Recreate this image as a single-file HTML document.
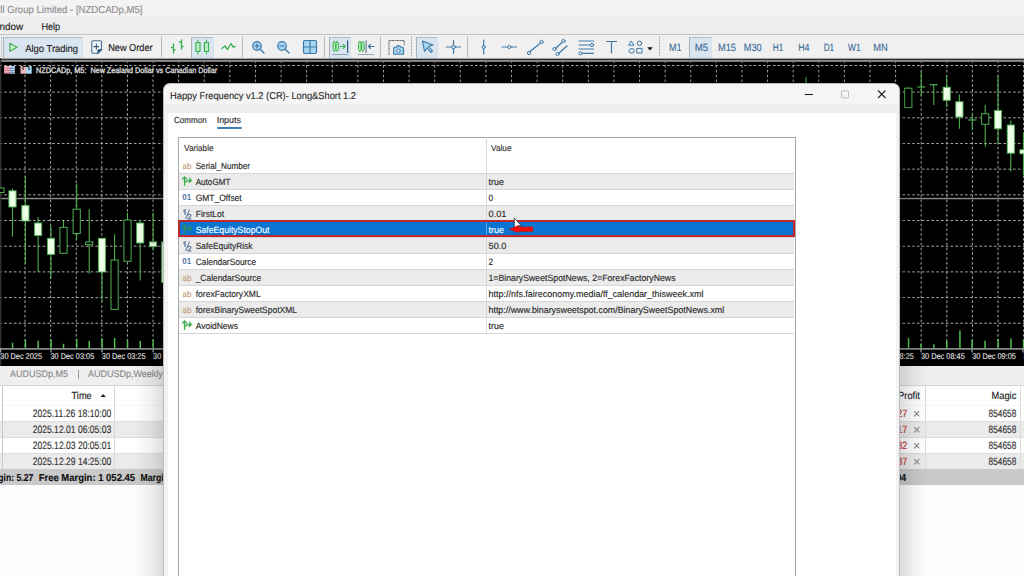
<!DOCTYPE html><html><head><meta charset="utf-8"><style>
*{margin:0;padding:0;box-sizing:border-box}
html,body{width:1024px;height:576px;overflow:hidden;background:#f0f0f0;font-family:"Liberation Sans",sans-serif;position:relative}
.a{position:absolute;white-space:nowrap}
.t{position:absolute;white-space:nowrap;line-height:1;-webkit-text-stroke:0.18px currentColor}
</style></head><body>
<div class="a" style="left:0;top:0;width:1024px;height:17px;background:#f3f3f3"></div>
<div class="a" style="left:0;top:17px;width:1024px;height:17px;background:#eeeeee"></div>
<svg class="a" style="left:0px;top:-8px;overflow:visible" width="148" height="26"><text x="0.30" y="20.50" font-family="Liberation Sans" font-size="10.174" fill="#8e8e8e" stroke="#8e8e8e" stroke-width="0.15" textLength="142.20" lengthAdjust="spacingAndGlyphs" text-rendering="geometricPrecision" xml:space="preserve">ll Group Limited - [NZDCADp,M5]</text></svg>
<svg class="a" style="left:-1px;top:9px;overflow:visible" width="29" height="26"><text x="0.51" y="20.70" font-family="Liberation Sans" font-size="10.174" fill="#1e1e1e" stroke="#1e1e1e" stroke-width="0.15" textLength="23.59" lengthAdjust="spacingAndGlyphs" text-rendering="geometricPrecision" xml:space="preserve">ndow</text></svg>
<svg class="a" style="left:41px;top:9px;overflow:visible" width="24" height="26"><text x="0.40" y="20.70" font-family="Liberation Sans" font-size="10.174" fill="#1e1e1e" stroke="#1e1e1e" stroke-width="0.15" textLength="18.80" lengthAdjust="spacingAndGlyphs" text-rendering="geometricPrecision" xml:space="preserve">Help</text></svg>
<div class="a" style="left:0;top:33.6px;width:1024px;height:1px;background:#c4c4c4"></div>
<div class="a" style="left:0;top:34.6px;width:1024px;height:24px;background:#f0f0f0"></div>
<div class="a" style="left:1px;top:37px;width:1px;height:20px;border-left:1px dotted #b0b0b0"></div>
<div class="a" style="left:2.5px;top:36.5px;width:80.5px;height:21px;background:#d9e5f0;border:1px solid;border-color:#b4bcc4 #d6e0ea #d6e0ea #a8b0b8"></div>
<div class="a" style="left:191px;top:36.5px;width:22.5px;height:21px;background:#d9e5f0;border:1px solid;border-color:#b4bcc4 #d6e0ea #d6e0ea #a8b0b8"></div>
<div class="a" style="left:328.5px;top:36.5px;width:22.5px;height:21px;background:#d9e5f0;border:1px solid;border-color:#b4bcc4 #d6e0ea #d6e0ea #a8b0b8"></div>
<div class="a" style="left:415.5px;top:36.5px;width:22.5px;height:21px;background:#d9e5f0;border:1px solid;border-color:#b4bcc4 #d6e0ea #d6e0ea #a8b0b8"></div>
<div class="a" style="left:689px;top:36.5px;width:23px;height:21px;background:#d9e5f0;border:1px solid;border-color:#b4bcc4 #d6e0ea #d6e0ea #a8b0b8"></div>
<svg class="a" style="left:0;top:34px" width="1024" height="25" viewBox="0 34 1024 25" fill="none" stroke-linecap="round" stroke-linejoin="round">
<path d="M9.9 43.3L17.1 47.3L9.9 51.3Z" fill="#c4f4c4" stroke="#4aa85a" stroke-width="1.2"/>
<path d="M93 40.8H100.3Q101.5 40.8 101.5 42V49.6L97.8 53.3H93Q91.8 53.3 91.8 52.1V42Q91.8 40.8 93 40.8Z" fill="#f2f9ff" stroke="#4a6c8c" stroke-width="1.1"/><path d="M93.9 46.6H98.8M96.35 44.1V49.1" stroke="#3a5a78" stroke-width="1.1"/><path d="M97.8 53.3V50.8Q97.8 49.6 99 49.6H101.5Z" fill="#2e5a80" stroke="#2e5a80" stroke-width="0.8"/>
<path d="M161.5 37V57" stroke="#b8b8b8" stroke-width="1"/>
<path d="M242.5 37V57" stroke="#b8b8b8" stroke-width="1"/>
<path d="M324.5 37V57" stroke="#b8b8b8" stroke-width="1"/>
<path d="M380.5 37V57" stroke="#b8b8b8" stroke-width="1"/>
<path d="M467.5 37V57" stroke="#b8b8b8" stroke-width="1"/>
<path d="M411.5 37V57" stroke="#a0a0a0" stroke-width="1" stroke-dasharray="1 2"/>
<path d="M659.5 37V57" stroke="#a0a0a0" stroke-width="1" stroke-dasharray="1 2"/>
<path d="M173.5 44V53M171.5 47.5H173.5M173.5 50H175M181.5 40V49M179.5 42H181.5M181.5 46.5H183" stroke="#38b050" stroke-width="1.3"/>
<path d="M198 40V54M206.5 40V54" stroke="#38b050" stroke-width="1"/><rect x="196" y="42.5" width="4" height="9" fill="#c8f0c8" stroke="#38b050" stroke-width="1.2"/><rect x="204.5" y="42.5" width="4" height="9" fill="#c8f0c8" stroke="#38b050" stroke-width="1.2"/>
<path d="M222 48.5L225 46L227.5 49.5L231 43.5L233 47L235 46.5" stroke="#38b050" stroke-width="1.3"/>
<circle cx="257" cy="46" r="4.3" stroke="#3c78a8" stroke-width="1.2" fill="#a9d4f0"/><path d="M260 49L264 53" stroke="#3c78a8" stroke-width="1.4"/><path d="M254.8 46H259.2" stroke="#3c78a8" stroke-width="1.1"/>
<path d="M257 43.8V48.2" stroke="#3c78a8" stroke-width="1.1"/>
<circle cx="282" cy="46" r="4.3" stroke="#3c78a8" stroke-width="1.2" fill="#a9d4f0"/><path d="M285 49L289 53" stroke="#3c78a8" stroke-width="1.4"/><path d="M279.8 46H284.2" stroke="#3c78a8" stroke-width="1.1"/>
<rect x="303.5" y="40.5" width="13" height="13" rx="1.5" fill="#a9d4f0" stroke="#3c78a8" stroke-width="1.2"/><path d="M310 40.5V53.5M303.5 47H316.5" stroke="#3c78a8" stroke-width="1.2"/>
<path d="M334.4 41.3L335.7 43.6V49.4L334.4 51.7L333.09999999999997 49.4V43.6Z" fill="#b8f0b8" stroke="#38b050" stroke-width="1"/><path d="M337.4 41.3L338.7 43.6V49.4L337.4 51.7L336.09999999999997 49.4V43.6Z" fill="#b8f0b8" stroke="#38b050" stroke-width="1"/>
<path d="M340.5 46.5H345M343.2 44.5L345.2 46.5L343.2 48.5" stroke="#38b050" stroke-width="1.1"/><path d="M347.6 40.8V52.4" stroke="#34587c" stroke-width="1.2"/><path d="M333 54.5H347.6" stroke="#8a9aa8" stroke-width="0.9"/>
<path d="M359.8 41.3L361.1 43.6V49.4L359.8 51.7L358.5 49.4V43.6Z" fill="#b8f0b8" stroke="#38b050" stroke-width="1"/><path d="M362.8 41.3L364.1 43.6V49.4L362.8 51.7L361.5 49.4V43.6Z" fill="#b8f0b8" stroke="#38b050" stroke-width="1"/>
<path d="M366.1 40.8V52.4" stroke="#7890a0" stroke-width="1.4"/><path d="M368.5 46.5H374M370.5 44.5L368.5 46.5L370.5 48.5" stroke="#3c78a8" stroke-width="1.1"/><path d="M358.3 54.5H373.4" stroke="#8a9aa8" stroke-width="0.9"/>
<path d="M389 54.5V40.5H404.2V46" stroke="#5a5a5a" stroke-width="0.9" stroke-dasharray="1.2 1.3"/><path d="M393.6 54.3V48.3Q393.6 47.2 394.7 47.2H396.3L397.2 45.9H399.9L400.8 47.2H402.4Q403.5 47.2 403.5 48.3V54.3Z" fill="#a9d4f0" stroke="#3c78a8" stroke-width="1.1"/><circle cx="398.5" cy="50.7" r="1.7" fill="#f4f8fb" stroke="#3c78a8" stroke-width="0.9"/>
<path d="M422.5 41L433 45L428.5 46.5L432.5 51L431 52.5L427 48L424.5 51.5Z" fill="#a9d4f0" stroke="#3c78a8" stroke-width="1.1"/>
<path d="M453.5 40.5V53.5M446.5 47H460.5" stroke="#3c78a8" stroke-width="1.2"/><circle cx="453.5" cy="47" r="1.8" fill="#f0f0f0" stroke="#3c78a8" stroke-width="1"/>
<path d="M483.7 40V54" stroke="#3c78a8" stroke-width="1.2"/><circle cx="483.7" cy="47" r="1.6" fill="#f0f0f0" stroke="#3c78a8" stroke-width="1"/>
<path d="M502 47H516.5" stroke="#3c78a8" stroke-width="1.2"/><circle cx="509.3" cy="47" r="1.6" fill="#f0f0f0" stroke="#3c78a8" stroke-width="1"/>
<path d="M530 51.5L540.5 43" stroke="#3c78a8" stroke-width="1.2"/><circle cx="529" cy="53" r="1.6" fill="#f0f0f0" stroke="#3c78a8" stroke-width="1"/><circle cx="541.5" cy="42" r="1.6" fill="#f0f0f0" stroke="#3c78a8" stroke-width="1"/>
<path d="M556 48L563 41.5M559 53L567 46" stroke="#3c78a8" stroke-width="1.2"/><circle cx="554.5" cy="49" r="1.6" fill="#f0f0f0" stroke="#3c78a8" stroke-width="1"/><circle cx="563.5" cy="41" r="1.6" fill="#f0f0f0" stroke="#3c78a8" stroke-width="1"/><circle cx="557.5" cy="54" r="1.6" fill="#f0f0f0" stroke="#3c78a8" stroke-width="1"/>
<path d="M579 41H593.5M579 45H590.5M579 49H593.5M582.5 53.3H593.5" stroke="#3c78a8" stroke-width="1.2"/><circle cx="592" cy="45" r="1.6" fill="#f0f0f0" stroke="#3c78a8" stroke-width="1"/><circle cx="580.5" cy="53.3" r="1.6" fill="#f0f0f0" stroke="#3c78a8" stroke-width="1"/>
<path d="M606.5 41.5H616.5M611.5 41.5V53" stroke="#3c78a8" stroke-width="1.2"/>
<path d="M631.5 41.3L634 45.2H629Z" stroke="#3c78a8" stroke-width="1"/><circle cx="639.5" cy="43.3" r="2.2" stroke="#3c78a8" stroke-width="1"/><path d="M629 50.8L630.5 48.6H633L634.5 50.8L633 53H630.5Z" stroke="#3c78a8" stroke-width="1"/><rect x="637.2" y="48.4" width="4.8" height="4.6" stroke="#3c78a8" stroke-width="1"/>
<path d="M647.3 47.3H652.7L650 50.5Z" fill="#111"/>
</svg>
<svg class="a" style="left:25px;top:31px;overflow:visible" width="58" height="26"><text x="0.20" y="20.70" font-family="Liberation Sans" font-size="10.029" fill="#222" stroke="#222" stroke-width="0.15" textLength="52.90" lengthAdjust="spacingAndGlyphs" text-rendering="geometricPrecision" xml:space="preserve">Algo Trading</text></svg>
<svg class="a" style="left:108px;top:31px;overflow:visible" width="50" height="26"><text x="0.20" y="20.00" font-family="Liberation Sans" font-size="10.029" fill="#222" stroke="#222" stroke-width="0.15" textLength="44.40" lengthAdjust="spacingAndGlyphs" text-rendering="geometricPrecision" xml:space="preserve">New Order</text></svg>
<svg class="a" style="left:669px;top:31px;overflow:visible" width="18" height="26"><text x="0.00" y="20.10" font-family="Liberation Sans" font-size="10.465" fill="#3f6f98" stroke="#3f6f98" stroke-width="0.15" textLength="12.50" lengthAdjust="spacingAndGlyphs" text-rendering="geometricPrecision" xml:space="preserve">M1</text></svg>
<svg class="a" style="left:694px;top:31px;overflow:visible" width="19" height="26"><text x="0.70" y="20.10" font-family="Liberation Sans" font-size="10.465" fill="#3f6f98" stroke="#3f6f98" stroke-width="0.15" textLength="13.40" lengthAdjust="spacingAndGlyphs" text-rendering="geometricPrecision" xml:space="preserve">M5</text></svg>
<svg class="a" style="left:717px;top:31px;overflow:visible" width="24" height="26"><text x="0.90" y="20.10" font-family="Liberation Sans" font-size="10.465" fill="#3f6f98" stroke="#3f6f98" stroke-width="0.15" textLength="18.10" lengthAdjust="spacingAndGlyphs" text-rendering="geometricPrecision" xml:space="preserve">M15</text></svg>
<svg class="a" style="left:743px;top:31px;overflow:visible" width="24" height="26"><text x="0.70" y="20.10" font-family="Liberation Sans" font-size="10.465" fill="#3f6f98" stroke="#3f6f98" stroke-width="0.15" textLength="18.00" lengthAdjust="spacingAndGlyphs" text-rendering="geometricPrecision" xml:space="preserve">M30</text></svg>
<svg class="a" style="left:772px;top:31px;overflow:visible" width="16" height="26"><text x="0.70" y="20.10" font-family="Liberation Sans" font-size="10.465" fill="#3f6f98" stroke="#3f6f98" stroke-width="0.15" textLength="10.60" lengthAdjust="spacingAndGlyphs" text-rendering="geometricPrecision" xml:space="preserve">H1</text></svg>
<svg class="a" style="left:798px;top:31px;overflow:visible" width="17" height="26"><text x="0.20" y="20.10" font-family="Liberation Sans" font-size="10.465" fill="#3f6f98" stroke="#3f6f98" stroke-width="0.15" textLength="11.40" lengthAdjust="spacingAndGlyphs" text-rendering="geometricPrecision" xml:space="preserve">H4</text></svg>
<svg class="a" style="left:823px;top:31px;overflow:visible" width="16" height="26"><text x="0.70" y="20.10" font-family="Liberation Sans" font-size="10.465" fill="#3f6f98" stroke="#3f6f98" stroke-width="0.15" textLength="10.50" lengthAdjust="spacingAndGlyphs" text-rendering="geometricPrecision" xml:space="preserve">D1</text></svg>
<svg class="a" style="left:848px;top:31px;overflow:visible" width="18" height="26"><text x="0.00" y="20.10" font-family="Liberation Sans" font-size="10.465" fill="#3f6f98" stroke="#3f6f98" stroke-width="0.15" textLength="12.60" lengthAdjust="spacingAndGlyphs" text-rendering="geometricPrecision" xml:space="preserve">W1</text></svg>
<svg class="a" style="left:873px;top:31px;overflow:visible" width="20" height="26"><text x="0.30" y="20.10" font-family="Liberation Sans" font-size="10.465" fill="#3f6f98" stroke="#3f6f98" stroke-width="0.15" textLength="14.50" lengthAdjust="spacingAndGlyphs" text-rendering="geometricPrecision" xml:space="preserve">MN</text></svg>
<svg width="1024" height="308" viewBox="0 58 1024 308" style="position:absolute;left:0;top:58px">
<rect x="0" y="58" width="1024" height="308" fill="#000"/>
<rect x="0" y="58" width="1024" height="0.8" fill="#fafafa"/>
<rect x="0" y="58.8" width="1024" height="1" fill="#1c1c1c"/>
<rect x="0" y="59.8" width="1024" height="2.1" fill="#8a8a8a"/>
<path d="M25.00 62V348 M50.61 62V348 M76.21 62V348 M101.82 62V348 M127.42 62V348 M153.03 62V348 M178.64 62V348 M204.24 62V348 M229.85 62V348 M255.45 62V348 M281.06 62V348 M306.67 62V348 M332.27 62V348 M357.88 62V348 M383.48 62V348 M409.09 62V348 M434.70 62V348 M460.30 62V348 M485.91 62V348 M511.51 62V348 M537.12 62V348 M562.73 62V348 M588.33 62V348 M613.94 62V348 M639.54 62V348 M665.15 62V348 M690.76 62V348 M716.36 62V348 M741.97 62V348 M767.57 62V348 M793.18 62V348 M818.79 62V348 M844.39 62V348 M870.00 62V348 M895.60 62V348 M921.21 62V348 M946.82 62V348 M972.42 62V348 M998.03 62V348 M1023.63 62V348" stroke="#a8a8a8" stroke-width="1" stroke-dasharray="2.6 2.204" stroke-dashoffset="1.77" fill="none"/>
<path d="M0 65.50H1024 M0 92.11H1024 M0 117.80H1024 M0 143.48H1024 M0 169.16H1024 M0 194.84H1024 M0 220.53H1024 M0 246.21H1024 M0 271.89H1024 M0 297.58H1024 M0 323.26H1024" stroke="#a8a8a8" stroke-width="1" stroke-dasharray="2.6 2.204" stroke-dashoffset="0.6" fill="none"/>
<rect x="0" y="197.85" width="1024" height="1.4" fill="#8c8c8c"/>
<rect x="0" y="58" width="1.3" height="308" fill="#333"/>
<path d="M0.50 188V192.5" stroke="#4caf50" stroke-width="1.1"/>
<rect x="-3.10" y="188" width="7.2" height="4.50" fill="#000" stroke="#4caf50" stroke-width="1"/>
<path d="M12.50 188.3V236.7" stroke="#4caf50" stroke-width="1.1"/>
<rect x="8.90" y="190.8" width="7.2" height="16.20" fill="#eaffe4" stroke="#4caf50" stroke-width="0.9"/>
<path d="M25.40 176.3V263.8" stroke="#4caf50" stroke-width="1.1"/>
<rect x="21.80" y="205.4" width="7.2" height="15.60" fill="#eaffe4" stroke="#4caf50" stroke-width="0.9"/>
<path d="M38.10 216.9V272" stroke="#4caf50" stroke-width="1.1"/>
<rect x="34.50" y="223" width="7.2" height="12.60" fill="#eaffe4" stroke="#4caf50" stroke-width="0.9"/>
<path d="M51.00 226V278" stroke="#4caf50" stroke-width="1.1"/>
<rect x="47.40" y="238.3" width="7.2" height="16.10" fill="#eaffe4" stroke="#4caf50" stroke-width="0.9"/>
<path d="M63.50 221V253.3" stroke="#4caf50" stroke-width="1.1"/>
<rect x="59.90" y="227.3" width="7.2" height="26.00" fill="#000" stroke="#4caf50" stroke-width="1"/>
<path d="M76.70 183.5V239.8" stroke="#4caf50" stroke-width="1.1"/>
<rect x="73.10" y="209.2" width="7.2" height="24.30" fill="#000" stroke="#4caf50" stroke-width="1"/>
<path d="M89.20 209.2V273.8" stroke="#4caf50" stroke-width="1.1"/>
<rect x="85.60" y="241.9" width="7.2" height="2.70" fill="#000" stroke="#4caf50" stroke-width="1"/>
<path d="M102.00 238.3V302" stroke="#4caf50" stroke-width="1.1"/>
<rect x="98.40" y="238.3" width="7.2" height="33.70" fill="#eaffe4" stroke="#4caf50" stroke-width="0.9"/>
<path d="M114.60 234.2V309.4" stroke="#4caf50" stroke-width="1.1"/>
<rect x="111.00" y="260" width="7.2" height="49.40" fill="#000" stroke="#4caf50" stroke-width="1"/>
<path d="M127.50 212.7V261.3" stroke="#4caf50" stroke-width="1.1"/>
<rect x="123.90" y="220" width="7.2" height="41.30" fill="#000" stroke="#4caf50" stroke-width="1"/>
<path d="M140.20 220V280.4" stroke="#4caf50" stroke-width="1.1"/>
<rect x="136.60" y="223" width="7.2" height="20.00" fill="#eaffe4" stroke="#4caf50" stroke-width="0.9"/>
<path d="M153.10 212.7V250.2" stroke="#4caf50" stroke-width="1.1"/>
<rect x="149.50" y="241.9" width="7.2" height="4.80" fill="#eaffe4" stroke="#4caf50" stroke-width="0.9"/>
<path d="M165.30 235V282.5" stroke="#4caf50" stroke-width="1.1"/>
<rect x="161.70" y="242" width="7.2" height="40.50" fill="#eaffe4" stroke="#4caf50" stroke-width="0.9"/>
<path d="M806.00 77.3V84" stroke="#4caf50" stroke-width="1.1"/>
<path d="M908.30 87V107.6" stroke="#4caf50" stroke-width="1.1"/>
<rect x="904.70" y="88.2" width="7.2" height="19.40" fill="#000" stroke="#4caf50" stroke-width="1"/>
<path d="M921.25 70.5V96.5" stroke="#4caf50" stroke-width="1.1"/>
<path d="M917.25 87H925.25" stroke="#4caf50" stroke-width="1.2"/>
<path d="M933.75 84.7V104.9" stroke="#4caf50" stroke-width="1.1"/>
<path d="M929.75 84.7H937.75" stroke="#4caf50" stroke-width="1.2"/>
<path d="M946.70 75.7V107" stroke="#4caf50" stroke-width="1.1"/>
<rect x="943.10" y="87.2" width="7.2" height="13.10" fill="#eaffe4" stroke="#4caf50" stroke-width="0.9"/>
<path d="M959.40 94.5V128.8" stroke="#4caf50" stroke-width="1.1"/>
<rect x="955.80" y="101.75" width="7.2" height="15.25" fill="#eaffe4" stroke="#4caf50" stroke-width="0.9"/>
<path d="M972.30 114.25V129.9" stroke="#4caf50" stroke-width="1.1"/>
<path d="M968.30 120H976.30" stroke="#4caf50" stroke-width="1.2"/>
<path d="M985.20 104.9V146.5" stroke="#4caf50" stroke-width="1.1"/>
<rect x="981.60" y="113.8" width="7.2" height="10.45" fill="#000" stroke="#4caf50" stroke-width="1"/>
<path d="M998.00 75.7V143.4" stroke="#4caf50" stroke-width="1.1"/>
<rect x="994.40" y="110.5" width="7.2" height="18.30" fill="#eaffe4" stroke="#4caf50" stroke-width="0.9"/>
<path d="M1010.80 120.5V171.5" stroke="#4caf50" stroke-width="1.1"/>
<rect x="1007.20" y="125" width="7.2" height="28.20" fill="#eaffe4" stroke="#4caf50" stroke-width="0.9"/>
<path d="M1023.50 133V175" stroke="#4caf50" stroke-width="1.1"/>
<rect x="1019.90" y="149.7" width="7.2" height="4.10" fill="#eaffe4" stroke="#4caf50" stroke-width="0.9"/>
<rect x="11.80" y="342.7" width="1.5" height="5.30" fill="#50c050"/>
<rect x="24.70" y="340" width="1.5" height="8.00" fill="#50c050"/>
<rect x="37.40" y="340.6" width="1.5" height="7.40" fill="#50c050"/>
<rect x="50.30" y="339.6" width="1.5" height="8.40" fill="#50c050"/>
<rect x="62.80" y="343.75" width="1.5" height="4.25" fill="#50c050"/>
<rect x="76.00" y="339" width="1.5" height="9.00" fill="#50c050"/>
<rect x="88.50" y="341" width="1.5" height="7.00" fill="#50c050"/>
<rect x="101.30" y="338" width="1.5" height="10.00" fill="#50c050"/>
<rect x="113.90" y="338" width="1.5" height="10.00" fill="#50c050"/>
<rect x="126.80" y="340" width="1.5" height="8.00" fill="#50c050"/>
<rect x="139.50" y="341" width="1.5" height="7.00" fill="#50c050"/>
<rect x="152.40" y="339.6" width="1.5" height="8.40" fill="#50c050"/>
<rect x="907.80" y="337.7" width="1.5" height="10.30" fill="#50c050"/>
<rect x="920.30" y="343.6" width="1.5" height="4.40" fill="#50c050"/>
<rect x="933.10" y="344.3" width="1.5" height="3.70" fill="#50c050"/>
<rect x="946.00" y="341" width="1.5" height="7.00" fill="#50c050"/>
<rect x="959.20" y="330.4" width="1.5" height="17.60" fill="#50c050"/>
<rect x="971.30" y="340" width="1.5" height="8.00" fill="#50c050"/>
<rect x="984.30" y="340.8" width="1.5" height="7.20" fill="#50c050"/>
<rect x="997.30" y="339" width="1.5" height="9.00" fill="#50c050"/>
<rect x="1010.30" y="338.4" width="1.5" height="9.60" fill="#50c050"/>
<rect x="1022.80" y="340" width="1.5" height="8.00" fill="#50c050"/>
<rect x="0" y="348.2" width="1024" height="1.4" fill="#a8a8a8"/>
<rect x="-0.10" y="349" width="1.2" height="3.5" fill="#a8a8a8"/>
<rect x="50.40" y="349" width="1.2" height="3.5" fill="#a8a8a8"/>
<rect x="101.40" y="349" width="1.2" height="3.5" fill="#a8a8a8"/>
<rect x="152.50" y="349" width="1.2" height="3.5" fill="#a8a8a8"/>
<rect x="869.40" y="349" width="1.2" height="3.5" fill="#a8a8a8"/>
<rect x="920.40" y="349" width="1.2" height="3.5" fill="#a8a8a8"/>
<rect x="971.40" y="349" width="1.2" height="3.5" fill="#a8a8a8"/>
<rect x="1022.40" y="349" width="1.2" height="3.5" fill="#a8a8a8"/>
<text x="0.3" y="359.2" fill="#e2e2e2" font-family="Liberation Sans" font-size="8.430" textLength="41.68" lengthAdjust="spacingAndGlyphs" text-rendering="geometricPrecision" stroke="#e2e2e2" stroke-width="0.12">30 Dec 2025</text>
<text x="50.5" y="359.2" fill="#e2e2e2" font-family="Liberation Sans" font-size="8.430" textLength="43.73" lengthAdjust="spacingAndGlyphs" text-rendering="geometricPrecision" stroke="#e2e2e2" stroke-width="0.12">30 Dec 03:05</text>
<text x="101.8" y="359.2" fill="#e2e2e2" font-family="Liberation Sans" font-size="8.430" textLength="43.73" lengthAdjust="spacingAndGlyphs" text-rendering="geometricPrecision" stroke="#e2e2e2" stroke-width="0.12">30 Dec 03:25</text>
<text x="153.1" y="359.2" fill="#e2e2e2" font-family="Liberation Sans" font-size="8.430" textLength="43.73" lengthAdjust="spacingAndGlyphs" text-rendering="geometricPrecision" stroke="#e2e2e2" stroke-width="0.12">30 Dec 03:45</text>
<text x="870.2" y="359.2" fill="#e2e2e2" font-family="Liberation Sans" font-size="8.430" textLength="43.73" lengthAdjust="spacingAndGlyphs" text-rendering="geometricPrecision" stroke="#e2e2e2" stroke-width="0.12">30 Dec 08:25</text>
<text x="921" y="359.2" fill="#e2e2e2" font-family="Liberation Sans" font-size="8.430" textLength="43.73" lengthAdjust="spacingAndGlyphs" text-rendering="geometricPrecision" stroke="#e2e2e2" stroke-width="0.12">30 Dec 08:45</text>
<text x="972.2" y="359.2" fill="#e2e2e2" font-family="Liberation Sans" font-size="8.430" textLength="43.73" lengthAdjust="spacingAndGlyphs" text-rendering="geometricPrecision" stroke="#e2e2e2" stroke-width="0.12">30 Dec 09:05</text>
<text x="1023.5" y="359.2" fill="#e2e2e2" font-family="Liberation Sans" font-size="8.430" textLength="43.73" lengthAdjust="spacingAndGlyphs" text-rendering="geometricPrecision" stroke="#e2e2e2" stroke-width="0.12">30 Dec 09:25</text>
</svg>
<svg class="a" style="left:0;top:62px" width="40" height="14" viewBox="0 62 40 14"><rect x="4" y="66" width="11" height="7.5" fill="#f4b8c0"/><rect x="9.8" y="66" width="5.2" height="7.5" fill="#a8d8f4"/><path d="M4 68.3H15M4 70.5H15M4 72.3H15" stroke="#c86878" stroke-width="0.7"/><path d="M9.8 68.3H15M9.8 70.5H15M9.8 72.3H15" stroke="#5890c0" stroke-width="0.7"/><rect x="20.5" y="66" width="5.5" height="7.7" fill="#f4b8c0"/><rect x="26" y="66" width="5.7" height="7.7" fill="#a8d8f4"/><path d="M23 66.5H29M23 66.5V70M29 66.5V70" stroke="#202020" stroke-width="1.1"/></svg>
<svg class="a" style="left:36px;top:52px;overflow:visible" width="187" height="26"><text x="0.10" y="20.60" font-family="Liberation Sans" font-size="8.140" fill="#dcdcdc" stroke="#dcdcdc" stroke-width="0.35" textLength="181.00" lengthAdjust="spacingAndGlyphs" text-rendering="geometricPrecision" xml:space="preserve">NZDCADp, M5:  New Zealand Dollar vs Canadian Dollar</text></svg>
<div class="a" style="left:0;top:366px;width:1024px;height:19px;background:#efefef"></div>
<div class="a" style="left:0;top:384.6px;width:1024px;height:1.4px;background:#d4d4d4"></div>
<svg class="a" style="left:10px;top:357px;overflow:visible" width="64" height="26"><text x="0.00" y="20.40" font-family="Liberation Sans" font-size="9.593" fill="#8a8a8a" stroke="#8a8a8a" stroke-width="0.15" textLength="58.00" lengthAdjust="spacingAndGlyphs" text-rendering="geometricPrecision" xml:space="preserve">AUDUSDp,M5</text></svg>
<div class="a" style="left:77.5px;top:369.5px;width:1.2px;height:9.5px;background:#9a9a9a"></div>
<svg class="a" style="left:88px;top:357px;overflow:visible" width="80" height="26"><text x="0.00" y="20.40" font-family="Liberation Sans" font-size="9.593" fill="#8a8a8a" stroke="#8a8a8a" stroke-width="0.15" textLength="74.84" lengthAdjust="spacingAndGlyphs" text-rendering="geometricPrecision" xml:space="preserve">AUDUSDp,Weekly</text></svg>
<div class="a" style="left:0;top:386px;width:1024px;height:98px;background:#fff"></div>
<div class="a" style="left:0;top:405px;width:1024px;height:16px;background:#ffffff;border-top:1px solid #f6f6f6"></div>
<div class="a" style="left:0;top:421px;width:1024px;height:16px;background:#ebebeb;border-top:1px solid #dedede"></div>
<div class="a" style="left:0;top:437px;width:1024px;height:16px;background:#ffffff;border-top:1px solid #dedede"></div>
<div class="a" style="left:0;top:453px;width:1024px;height:16px;background:#ebebeb;border-top:1px solid #dedede"></div>
<div class="a" style="left:2px;top:386px;width:1px;height:83px;background:#c8c8c8"></div>
<div class="a" style="left:113.8px;top:386px;width:1.6px;height:83px;background:#d8d8d8"></div>
<div class="a" style="left:924.5px;top:386px;width:1px;height:83px;background:#dedede"></div>
<div class="a" style="left:1020px;top:386px;width:1px;height:83px;background:#dedede"></div>
<svg class="a" style="left:71px;top:378px;overflow:visible" width="26" height="26"><text x="0.50" y="20.90" font-family="Liberation Sans" font-size="10.320" fill="#222" stroke="#222" stroke-width="0.15" textLength="20.30" lengthAdjust="spacingAndGlyphs" text-rendering="geometricPrecision" xml:space="preserve">Time</text></svg>
<svg class="a" style="left:99.5px;top:393px" width="7" height="5" viewBox="0 0 7 5"><path d="M0.5 4L3.2 0.9L5.9 4Z" fill="#222"/></svg>
<svg class="a" style="left:32px;top:396px;overflow:visible" width="84" height="26"><text x="0.70" y="20.70" font-family="Liberation Sans" font-size="10.610" fill="#333" stroke="#333" stroke-width="0.15" textLength="78.60" lengthAdjust="spacingAndGlyphs" text-rendering="geometricPrecision" xml:space="preserve">2025.11.26 18:10:00</text></svg>
<svg class="a" style="left:897px;top:396px;overflow:visible" width="16" height="26"><text x="0.37" y="20.70" font-family="Liberation Sans" font-size="10.610" fill="#c03030" stroke="#c03030" stroke-width="0.15" textLength="10.03" lengthAdjust="spacingAndGlyphs" text-rendering="geometricPrecision" xml:space="preserve">27</text></svg>
<svg class="a" style="left:988px;top:396px;overflow:visible" width="33" height="26"><text x="0.60" y="20.70" font-family="Liberation Sans" font-size="10.610" fill="#333" stroke="#333" stroke-width="0.15" textLength="27.70" lengthAdjust="spacingAndGlyphs" text-rendering="geometricPrecision" xml:space="preserve">854658</text></svg>
<svg class="a" style="left:913px;top:409.5px" width="8" height="8" viewBox="0 0 8 8"><path d="M1.2 1.2L6.3 6.3M6.3 1.2L1.2 6.3" stroke="#8a8a8a" stroke-width="1.1"/></svg>
<svg class="a" style="left:32px;top:412px;overflow:visible" width="84" height="26"><text x="0.70" y="20.70" font-family="Liberation Sans" font-size="10.610" fill="#333" stroke="#333" stroke-width="0.15" textLength="78.60" lengthAdjust="spacingAndGlyphs" text-rendering="geometricPrecision" xml:space="preserve">2025.12.01 06:05:03</text></svg>
<svg class="a" style="left:897px;top:412px;overflow:visible" width="16" height="26"><text x="0.37" y="20.70" font-family="Liberation Sans" font-size="10.610" fill="#c03030" stroke="#c03030" stroke-width="0.15" textLength="10.03" lengthAdjust="spacingAndGlyphs" text-rendering="geometricPrecision" xml:space="preserve">17</text></svg>
<svg class="a" style="left:988px;top:412px;overflow:visible" width="33" height="26"><text x="0.60" y="20.70" font-family="Liberation Sans" font-size="10.610" fill="#333" stroke="#333" stroke-width="0.15" textLength="27.70" lengthAdjust="spacingAndGlyphs" text-rendering="geometricPrecision" xml:space="preserve">854658</text></svg>
<svg class="a" style="left:913px;top:425.5px" width="8" height="8" viewBox="0 0 8 8"><path d="M1.2 1.2L6.3 6.3M6.3 1.2L1.2 6.3" stroke="#8a8a8a" stroke-width="1.1"/></svg>
<svg class="a" style="left:32px;top:428px;overflow:visible" width="84" height="26"><text x="0.70" y="20.70" font-family="Liberation Sans" font-size="10.610" fill="#333" stroke="#333" stroke-width="0.15" textLength="78.60" lengthAdjust="spacingAndGlyphs" text-rendering="geometricPrecision" xml:space="preserve">2025.12.03 20:05:01</text></svg>
<svg class="a" style="left:897px;top:428px;overflow:visible" width="16" height="26"><text x="0.37" y="20.70" font-family="Liberation Sans" font-size="10.610" fill="#c03030" stroke="#c03030" stroke-width="0.15" textLength="10.03" lengthAdjust="spacingAndGlyphs" text-rendering="geometricPrecision" xml:space="preserve">32</text></svg>
<svg class="a" style="left:988px;top:428px;overflow:visible" width="33" height="26"><text x="0.60" y="20.70" font-family="Liberation Sans" font-size="10.610" fill="#333" stroke="#333" stroke-width="0.15" textLength="27.70" lengthAdjust="spacingAndGlyphs" text-rendering="geometricPrecision" xml:space="preserve">854658</text></svg>
<svg class="a" style="left:913px;top:441.5px" width="8" height="8" viewBox="0 0 8 8"><path d="M1.2 1.2L6.3 6.3M6.3 1.2L1.2 6.3" stroke="#8a8a8a" stroke-width="1.1"/></svg>
<svg class="a" style="left:32px;top:444px;overflow:visible" width="84" height="26"><text x="0.70" y="20.70" font-family="Liberation Sans" font-size="10.610" fill="#333" stroke="#333" stroke-width="0.15" textLength="78.60" lengthAdjust="spacingAndGlyphs" text-rendering="geometricPrecision" xml:space="preserve">2025.12.29 14:25:00</text></svg>
<svg class="a" style="left:897px;top:444px;overflow:visible" width="16" height="26"><text x="0.37" y="20.70" font-family="Liberation Sans" font-size="10.610" fill="#c03030" stroke="#c03030" stroke-width="0.15" textLength="10.03" lengthAdjust="spacingAndGlyphs" text-rendering="geometricPrecision" xml:space="preserve">37</text></svg>
<svg class="a" style="left:988px;top:444px;overflow:visible" width="33" height="26"><text x="0.60" y="20.70" font-family="Liberation Sans" font-size="10.610" fill="#333" stroke="#333" stroke-width="0.15" textLength="27.70" lengthAdjust="spacingAndGlyphs" text-rendering="geometricPrecision" xml:space="preserve">854658</text></svg>
<svg class="a" style="left:913px;top:457.5px" width="8" height="8" viewBox="0 0 8 8"><path d="M1.2 1.2L6.3 6.3M6.3 1.2L1.2 6.3" stroke="#8a8a8a" stroke-width="1.1"/></svg>
<svg class="a" style="left:898px;top:378px;overflow:visible" width="27" height="26"><text x="0.12" y="20.90" font-family="Liberation Sans" font-size="10.320" fill="#222" stroke="#222" stroke-width="0.15" textLength="21.68" lengthAdjust="spacingAndGlyphs" text-rendering="geometricPrecision" xml:space="preserve">Profit</text></svg>
<svg class="a" style="left:991px;top:378px;overflow:visible" width="30" height="26"><text x="0.53" y="20.90" font-family="Liberation Sans" font-size="10.320" fill="#222" stroke="#222" stroke-width="0.15" textLength="24.77" lengthAdjust="spacingAndGlyphs" text-rendering="geometricPrecision" xml:space="preserve">Magic</text></svg>
<div class="a" style="left:0;top:469px;width:1024px;height:15.7px;background:#c9c9c9"></div>
<svg class="a" style="left:-2px;top:460px;overflow:visible" width="41" height="26"><text x="0.22" y="20.50" font-family="Liberation Sans" font-size="10.174" fill="#111" font-weight="bold" stroke="#111" stroke-width="0.15" textLength="35.08" lengthAdjust="spacingAndGlyphs" text-rendering="geometricPrecision" xml:space="preserve">gin: 5.27</text></svg>
<svg class="a" style="left:38px;top:460px;overflow:visible" width="102" height="26"><text x="0.70" y="20.50" font-family="Liberation Sans" font-size="10.174" fill="#111" font-weight="bold" stroke="#111" stroke-width="0.15" textLength="96.40" lengthAdjust="spacingAndGlyphs" text-rendering="geometricPrecision" xml:space="preserve">Free Margin: 1 052.45</text></svg>
<svg class="a" style="left:140px;top:460px;overflow:visible" width="58" height="26"><text x="0.50" y="20.50" font-family="Liberation Sans" font-size="10.174" fill="#111" font-weight="bold" stroke="#111" stroke-width="0.15" textLength="52.86" lengthAdjust="spacingAndGlyphs" text-rendering="geometricPrecision" xml:space="preserve">Margin Level</text></svg>
<svg class="a" style="left:896px;top:460px;overflow:visible" width="15" height="26"><text x="0.38" y="20.50" font-family="Liberation Sans" font-size="10.174" fill="#111" font-weight="bold" stroke="#111" stroke-width="0.15" textLength="9.62" lengthAdjust="spacingAndGlyphs" text-rendering="geometricPrecision" xml:space="preserve">04</text></svg>
<div class="a" style="left:0;top:484.5px;width:1024px;height:92px;background:#fdfdfd"></div>
<div class="a" style="left:163px;top:83px;width:737px;height:520px;border-radius:7px 7px 0 0;box-shadow:0 4px 28px 4px rgba(0,0,0,0.22)"></div>
<div class="a" style="left:163px;top:83px;width:737px;height:520px;background:#f2f2f2;border-radius:7px 7px 0 0;border:1px solid #bdbdbd;border-bottom:none"></div>
<div class="a" style="left:164px;top:84px;width:735px;height:20.4px;background:#f5f5f5;border-radius:6px 6px 0 0"></div>
<div class="a" style="left:164px;top:104.4px;width:735px;height:8.8px;background:#eeeeee"></div>
<svg class="a" style="left:170px;top:78px;overflow:visible" width="192" height="26"><text x="0.00" y="20.70" font-family="Liberation Sans" font-size="9.884" fill="#2e2e2e" stroke="#2e2e2e" stroke-width="0.15" textLength="186.00" lengthAdjust="spacingAndGlyphs" text-rendering="geometricPrecision" xml:space="preserve">Happy Frequency v1.2 (CR)- Long&amp;Short 1.2</text></svg>
<svg class="a" style="left:780px;top:83px" width="120" height="30" viewBox="780 83 120 30" fill="none"><path d="M804.8 94.5H813" stroke="#222" stroke-width="1.1"/><rect x="841.5" y="90.8" width="7" height="7" rx="0.8" stroke="#b8b8b8" stroke-width="0.9"/><path d="M878 90.5L885.5 98M885.5 90.5L878 98" stroke="#222" stroke-width="1.1"/></svg>
<div class="a" style="left:168px;top:113px;width:728px;height:470px;background:#fff"></div>
<svg class="a" style="left:173px;top:102px;overflow:visible" width="38" height="26"><text x="0.90" y="20.90" font-family="Liberation Sans" font-size="8.866" fill="#303030" stroke="#303030" stroke-width="0.15" textLength="32.80" lengthAdjust="spacingAndGlyphs" text-rendering="geometricPrecision" xml:space="preserve">Common</text></svg>
<svg class="a" style="left:216px;top:102px;overflow:visible" width="30" height="26"><text x="0.70" y="20.90" font-family="Liberation Sans" font-size="8.866" fill="#303030" stroke="#303030" stroke-width="0.15" text-rendering="geometricPrecision" xml:space="preserve">Inputs</text></svg>
<div class="a" style="left:216.5px;top:127px;width:25px;height:2px;background:#3e7cae;border-radius:1px"></div>
<div class="a" style="left:178px;top:136.5px;width:618px;height:450px;border:1px solid #a8a8a8;background:#fff"></div>
<svg class="a" style="left:184px;top:131px;overflow:visible" width="35" height="26"><text x="0.10" y="20.00" font-family="Liberation Sans" font-size="8.721" fill="#333" stroke="#333" stroke-width="0.15" textLength="29.40" lengthAdjust="spacingAndGlyphs" text-rendering="geometricPrecision" xml:space="preserve">Variable</text></svg>
<svg class="a" style="left:491px;top:131px;overflow:visible" width="26" height="26"><text x="0.00" y="20.00" font-family="Liberation Sans" font-size="8.721" fill="#333" stroke="#333" stroke-width="0.15" textLength="20.50" lengthAdjust="spacingAndGlyphs" text-rendering="geometricPrecision" xml:space="preserve">Value</text></svg>
<div class="a" style="left:486px;top:137px;width:1px;height:20px;background:#d8d8d8"></div>
<div class="a" style="left:179px;top:157px;width:615px;height:16px;background:#ffffff;"></div>
<div class="a" style="left:486px;top:157px;width:1px;height:16px;background:#d8d8d8"></div>
<svg class="a" style="left:182px;top:148px;overflow:visible" width="14" height="26"><text x="0.60" y="20.60" font-family="Liberation Sans" font-size="8.576" fill="#c4a080" stroke="#c4a080" stroke-width="0.15" textLength="8.90" lengthAdjust="spacingAndGlyphs" text-rendering="geometricPrecision" xml:space="preserve">ab</text></svg>
<svg class="a" style="left:195px;top:148px;overflow:visible" width="60" height="26"><text x="0.70" y="20.60" font-family="Liberation Sans" font-size="9.157" fill="#2a2a2a" stroke="#2a2a2a" stroke-width="0.15" textLength="54.25" lengthAdjust="spacingAndGlyphs" text-rendering="geometricPrecision" xml:space="preserve">Serial_Number</text></svg>
<div class="a" style="left:179px;top:173px;width:615px;height:16px;background:#ebebeb;border-top:1.3px solid #d6d6d6;"></div>
<div class="a" style="left:486px;top:173px;width:1px;height:16px;background:#d8d8d8"></div>
<svg class="a" style="left:182.0px;top:175.1px" width="14" height="12" viewBox="0 0 14 12" fill="none" stroke-linecap="round" stroke-linejoin="round"><path d="M2.6 10.2V2.1M0.6 4.2L2.6 2L4.6 4.2M2.6 8Q3.4 5.6 9.3 5.4M7.4 3.5L9.5 5.4L7.4 7.3" stroke="#d2f6d2" stroke-width="2.6"/><path d="M2.6 10.2V2.1M0.6 4.2L2.6 2L4.6 4.2M2.6 8Q3.4 5.6 9.3 5.4M7.4 3.5L9.5 5.4L7.4 7.3" stroke="#48a85a" stroke-width="1.2"/></svg>
<svg class="a" style="left:195px;top:164px;overflow:visible" width="40" height="26"><text x="0.70" y="20.60" font-family="Liberation Sans" font-size="9.157" fill="#2a2a2a" stroke="#2a2a2a" stroke-width="0.15" textLength="34.75" lengthAdjust="spacingAndGlyphs" text-rendering="geometricPrecision" xml:space="preserve">AutoGMT</text></svg>
<svg class="a" style="left:488px;top:164px;overflow:visible" width="21" height="26"><text x="0.50" y="20.60" font-family="Liberation Sans" font-size="9.157" fill="#2a2a2a" stroke="#2a2a2a" stroke-width="0.15" textLength="15.50" lengthAdjust="spacingAndGlyphs" text-rendering="geometricPrecision" xml:space="preserve">true</text></svg>
<div class="a" style="left:179px;top:189px;width:615px;height:16px;background:#ffffff;border-top:1.3px solid #d6d6d6;"></div>
<div class="a" style="left:486px;top:189px;width:1px;height:16px;background:#d8d8d8"></div>
<svg class="a" style="left:182px;top:180px;overflow:visible" width="15" height="26"><text x="0.20" y="20.20" font-family="Liberation Sans" font-size="8.576" fill="#4f7aa6" font-weight="bold" textLength="9.00" lengthAdjust="spacingAndGlyphs" text-rendering="geometricPrecision" xml:space="preserve">01</text></svg>
<svg class="a" style="left:195px;top:180px;overflow:visible" width="52" height="26"><text x="0.70" y="20.60" font-family="Liberation Sans" font-size="9.157" fill="#2a2a2a" stroke="#2a2a2a" stroke-width="0.15" textLength="46.00" lengthAdjust="spacingAndGlyphs" text-rendering="geometricPrecision" xml:space="preserve">GMT_Offset</text></svg>
<svg class="a" style="left:488px;top:180px;overflow:visible" width="10" height="26"><text x="0.50" y="20.60" font-family="Liberation Sans" font-size="9.157" fill="#2a2a2a" stroke="#2a2a2a" stroke-width="0.15" textLength="4.58" lengthAdjust="spacingAndGlyphs" text-rendering="geometricPrecision" xml:space="preserve">0</text></svg>
<div class="a" style="left:179px;top:205px;width:615px;height:16px;background:#ebebeb;border-top:1.3px solid #d6d6d6;"></div>
<div class="a" style="left:486px;top:205px;width:1px;height:16px;background:#d8d8d8"></div>
<svg class="a" style="left:182.0px;top:209px" width="12" height="11" viewBox="0 0 12 11" fill="none"><path d="M1.2 2.3L3 1V5.8" stroke="#5a7a9c" stroke-width="1.3"/><path d="M7.6 0.6L3.6 9.8" stroke="#5a7a9c" stroke-width="1.1"/><path d="M5.9 6.2C6.3 4.9 9 4.9 9 6.4C9 7.7 6.2 8.8 6 9.9H9.4" stroke="#5a7a9c" stroke-width="1.2"/></svg>
<svg class="a" style="left:195px;top:196px;overflow:visible" width="34" height="26"><text x="0.70" y="20.60" font-family="Liberation Sans" font-size="9.157" fill="#2a2a2a" stroke="#2a2a2a" stroke-width="0.15" textLength="28.50" lengthAdjust="spacingAndGlyphs" text-rendering="geometricPrecision" xml:space="preserve">FirstLot</text></svg>
<svg class="a" style="left:488px;top:196px;overflow:visible" width="24" height="26"><text x="0.50" y="20.60" font-family="Liberation Sans" font-size="9.157" fill="#2a2a2a" stroke="#2a2a2a" stroke-width="0.15" textLength="18.00" lengthAdjust="spacingAndGlyphs" text-rendering="geometricPrecision" xml:space="preserve">0.01</text></svg>
<div class="a" style="left:179px;top:221px;width:615px;height:16px;background:#ffffff;border-top:1.3px solid #d6d6d6;"></div>
<div class="a" style="left:486px;top:221px;width:1px;height:16px;background:#d8d8d8"></div>
<div class="a" style="left:178.3px;top:220.3px;width:617px;height:16.4px;background:#0a74d2;border:2px solid #c0262e"></div>
<div class="a" style="left:485.8px;top:222.5px;width:1px;height:12px;background:#5aa6e8"></div>
<svg class="a" style="left:182.0px;top:223.1px" width="14" height="12" viewBox="0 0 14 12" fill="none" stroke-linecap="round" stroke-linejoin="round"><path d="M2.6 10.2V2.1M0.6 4.2L2.6 2L4.6 4.2M2.6 8Q3.4 5.6 9.3 5.4M7.4 3.5L9.5 5.4L7.4 7.3" stroke="#1a7cc0" stroke-width="2.6"/><path d="M2.6 10.2V2.1M0.6 4.2L2.6 2L4.6 4.2M2.6 8Q3.4 5.6 9.3 5.4M7.4 3.5L9.5 5.4L7.4 7.3" stroke="#2e8a60" stroke-width="1.2"/></svg>
<svg class="a" style="left:195px;top:212px;overflow:visible" width="79" height="26"><text x="0.70" y="20.60" font-family="Liberation Sans" font-size="9.157" fill="#fff" stroke="#fff" stroke-width="0.15" textLength="73.75" lengthAdjust="spacingAndGlyphs" text-rendering="geometricPrecision" xml:space="preserve">SafeEquityStopOut</text></svg>
<svg class="a" style="left:488px;top:212px;overflow:visible" width="21" height="26"><text x="0.50" y="20.60" font-family="Liberation Sans" font-size="9.157" fill="#fff" stroke="#fff" stroke-width="0.15" textLength="15.50" lengthAdjust="spacingAndGlyphs" text-rendering="geometricPrecision" xml:space="preserve">true</text></svg>
<div class="a" style="left:179px;top:237px;width:615px;height:16px;background:#ebebeb;border-top:1.3px solid #d6d6d6;"></div>
<div class="a" style="left:486px;top:237px;width:1px;height:16px;background:#d8d8d8"></div>
<svg class="a" style="left:182.0px;top:241px" width="12" height="11" viewBox="0 0 12 11" fill="none"><path d="M1.2 2.3L3 1V5.8" stroke="#5a7a9c" stroke-width="1.3"/><path d="M7.6 0.6L3.6 9.8" stroke="#5a7a9c" stroke-width="1.1"/><path d="M5.9 6.2C6.3 4.9 9 4.9 9 6.4C9 7.7 6.2 8.8 6 9.9H9.4" stroke="#5a7a9c" stroke-width="1.2"/></svg>
<svg class="a" style="left:195px;top:228px;overflow:visible" width="62" height="26"><text x="0.70" y="20.60" font-family="Liberation Sans" font-size="9.157" fill="#2a2a2a" stroke="#2a2a2a" stroke-width="0.15" textLength="56.75" lengthAdjust="spacingAndGlyphs" text-rendering="geometricPrecision" xml:space="preserve">SafeEquityRisk</text></svg>
<svg class="a" style="left:488px;top:228px;overflow:visible" width="24" height="26"><text x="0.50" y="20.60" font-family="Liberation Sans" font-size="9.157" fill="#2a2a2a" stroke="#2a2a2a" stroke-width="0.15" textLength="18.00" lengthAdjust="spacingAndGlyphs" text-rendering="geometricPrecision" xml:space="preserve">50.0</text></svg>
<div class="a" style="left:179px;top:253px;width:615px;height:16px;background:#ffffff;border-top:1.3px solid #d6d6d6;"></div>
<div class="a" style="left:486px;top:253px;width:1px;height:16px;background:#d8d8d8"></div>
<svg class="a" style="left:182px;top:244px;overflow:visible" width="15" height="26"><text x="0.20" y="20.20" font-family="Liberation Sans" font-size="8.576" fill="#4f7aa6" font-weight="bold" textLength="9.00" lengthAdjust="spacingAndGlyphs" text-rendering="geometricPrecision" xml:space="preserve">01</text></svg>
<svg class="a" style="left:195px;top:244px;overflow:visible" width="66" height="26"><text x="0.70" y="20.60" font-family="Liberation Sans" font-size="9.157" fill="#2a2a2a" stroke="#2a2a2a" stroke-width="0.15" textLength="60.50" lengthAdjust="spacingAndGlyphs" text-rendering="geometricPrecision" xml:space="preserve">CalendarSource</text></svg>
<svg class="a" style="left:488px;top:244px;overflow:visible" width="10" height="26"><text x="0.50" y="20.60" font-family="Liberation Sans" font-size="9.157" fill="#2a2a2a" stroke="#2a2a2a" stroke-width="0.15" textLength="4.58" lengthAdjust="spacingAndGlyphs" text-rendering="geometricPrecision" xml:space="preserve">2</text></svg>
<div class="a" style="left:179px;top:269px;width:615px;height:16px;background:#ebebeb;border-top:1.3px solid #d6d6d6;"></div>
<div class="a" style="left:486px;top:269px;width:1px;height:16px;background:#d8d8d8"></div>
<svg class="a" style="left:182px;top:260px;overflow:visible" width="14" height="26"><text x="0.60" y="20.60" font-family="Liberation Sans" font-size="8.576" fill="#c4a080" stroke="#c4a080" stroke-width="0.15" textLength="8.90" lengthAdjust="spacingAndGlyphs" text-rendering="geometricPrecision" xml:space="preserve">ab</text></svg>
<svg class="a" style="left:195px;top:260px;overflow:visible" width="71" height="26"><text x="0.70" y="20.60" font-family="Liberation Sans" font-size="9.157" fill="#2a2a2a" stroke="#2a2a2a" stroke-width="0.15" textLength="65.50" lengthAdjust="spacingAndGlyphs" text-rendering="geometricPrecision" xml:space="preserve">_CalendarSource</text></svg>
<svg class="a" style="left:488px;top:260px;overflow:visible" width="193" height="26"><text x="0.50" y="20.60" font-family="Liberation Sans" font-size="9.157" fill="#2a2a2a" stroke="#2a2a2a" stroke-width="0.15" textLength="187.00" lengthAdjust="spacingAndGlyphs" text-rendering="geometricPrecision" xml:space="preserve">1=BinarySweetSpotNews, 2=ForexFactoryNews</text></svg>
<div class="a" style="left:179px;top:285px;width:615px;height:16px;background:#ffffff;border-top:1.3px solid #d6d6d6;"></div>
<div class="a" style="left:486px;top:285px;width:1px;height:16px;background:#d8d8d8"></div>
<svg class="a" style="left:182px;top:276px;overflow:visible" width="14" height="26"><text x="0.60" y="20.60" font-family="Liberation Sans" font-size="8.576" fill="#c4a080" stroke="#c4a080" stroke-width="0.15" textLength="8.90" lengthAdjust="spacingAndGlyphs" text-rendering="geometricPrecision" xml:space="preserve">ab</text></svg>
<svg class="a" style="left:195px;top:276px;overflow:visible" width="71" height="26"><text x="0.70" y="20.60" font-family="Liberation Sans" font-size="9.157" fill="#2a2a2a" stroke="#2a2a2a" stroke-width="0.15" textLength="65.00" lengthAdjust="spacingAndGlyphs" text-rendering="geometricPrecision" xml:space="preserve">forexFactoryXML</text></svg>
<svg class="a" style="left:488px;top:276px;overflow:visible" width="220" height="26"><text x="0.50" y="20.60" font-family="Liberation Sans" font-size="9.157" fill="#2a2a2a" stroke="#2a2a2a" stroke-width="0.15" textLength="214.90" lengthAdjust="spacingAndGlyphs" text-rendering="geometricPrecision" xml:space="preserve">http://nfs.faireconomy.media/ff_calendar_thisweek.xml</text></svg>
<div class="a" style="left:179px;top:301px;width:615px;height:16px;background:#ebebeb;border-top:1.3px solid #d6d6d6;"></div>
<div class="a" style="left:486px;top:301px;width:1px;height:16px;background:#d8d8d8"></div>
<svg class="a" style="left:182px;top:292px;overflow:visible" width="14" height="26"><text x="0.60" y="20.60" font-family="Liberation Sans" font-size="8.576" fill="#c4a080" stroke="#c4a080" stroke-width="0.15" textLength="8.90" lengthAdjust="spacingAndGlyphs" text-rendering="geometricPrecision" xml:space="preserve">ab</text></svg>
<svg class="a" style="left:195px;top:292px;overflow:visible" width="107" height="26"><text x="0.70" y="20.60" font-family="Liberation Sans" font-size="9.157" fill="#2a2a2a" stroke="#2a2a2a" stroke-width="0.15" textLength="101.25" lengthAdjust="spacingAndGlyphs" text-rendering="geometricPrecision" xml:space="preserve">forexBinarySweetSpotXML</text></svg>
<svg class="a" style="left:488px;top:292px;overflow:visible" width="241" height="26"><text x="0.50" y="20.60" font-family="Liberation Sans" font-size="9.157" fill="#2a2a2a" stroke="#2a2a2a" stroke-width="0.15" textLength="235.70" lengthAdjust="spacingAndGlyphs" text-rendering="geometricPrecision" xml:space="preserve">http://www.binarysweetspot.com/BinarySweetSpotNews.xml</text></svg>
<div class="a" style="left:179px;top:317px;width:615px;height:17px;background:#ffffff;border-top:1.3px solid #d6d6d6;border-bottom:1.3px solid #d6d6d6;"></div>
<div class="a" style="left:486px;top:317px;width:1px;height:16px;background:#d8d8d8"></div>
<svg class="a" style="left:182.0px;top:319.1px" width="14" height="12" viewBox="0 0 14 12" fill="none" stroke-linecap="round" stroke-linejoin="round"><path d="M2.6 10.2V2.1M0.6 4.2L2.6 2L4.6 4.2M2.6 8Q3.4 5.6 9.3 5.4M7.4 3.5L9.5 5.4L7.4 7.3" stroke="#d2f6d2" stroke-width="2.6"/><path d="M2.6 10.2V2.1M0.6 4.2L2.6 2L4.6 4.2M2.6 8Q3.4 5.6 9.3 5.4M7.4 3.5L9.5 5.4L7.4 7.3" stroke="#48a85a" stroke-width="1.2"/></svg>
<svg class="a" style="left:195px;top:308px;overflow:visible" width="48" height="26"><text x="0.70" y="20.60" font-family="Liberation Sans" font-size="9.157" fill="#2a2a2a" stroke="#2a2a2a" stroke-width="0.15" textLength="42.25" lengthAdjust="spacingAndGlyphs" text-rendering="geometricPrecision" xml:space="preserve">AvoidNews</text></svg>
<svg class="a" style="left:488px;top:308px;overflow:visible" width="21" height="26"><text x="0.50" y="20.60" font-family="Liberation Sans" font-size="9.157" fill="#2a2a2a" stroke="#2a2a2a" stroke-width="0.15" textLength="15.50" lengthAdjust="spacingAndGlyphs" text-rendering="geometricPrecision" xml:space="preserve">true</text></svg>
<svg class="a" style="left:500px;top:214px" width="40" height="24" viewBox="500 214 40 24"><path d="M514.3 218V228.5L516.6 226.3L518.3 229.8L519.6 229.2L518 225.8H521.2Z" fill="#fff" stroke="#222" stroke-width="0.7"/><path d="M509 229.2L518.5 225.6V226.9H532.8V231.5H518.5V232.7Z" fill="#f00a0a" stroke="#c01010" stroke-width="0.5"/></svg>
</body></html>
